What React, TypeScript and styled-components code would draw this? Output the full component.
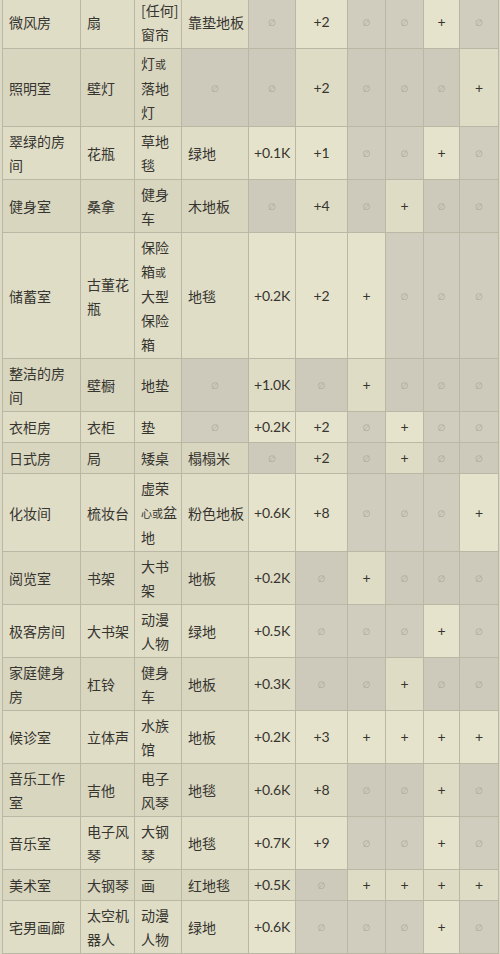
import React from "react";
import styled, { createGlobalStyle, css } from "styled-components";

type Mark = "n" | "p" | string;

interface Room {
  name: string;
  item: string;
  extra: React.ReactNode;
  floor: string | null;
  vals: Mark[];
}

const Line = styled.div`
  white-space: nowrap;
`;

const Small = styled.span`
  font-size: 11px;
`;

const lines = (...ls: React.ReactNode[]) => (
  <>
    {ls.map((l, i) => (
      <Line key={i}>{l}</Line>
    ))}
  </>
);

const rooms: Room[] = [
  { name: "微风房", item: "扇", extra: "[任何]\n窗帘", floor: "靠垫地板", vals: ["n", "+2", "n", "n", "p", "n"] },
  {
    name: "照明室",
    item: "壁灯",
    extra: lines(<>灯<Small>或</Small></>, "落地", "灯"),
    floor: null,
    vals: ["n", "+2", "n", "n", "n", "p"],
  },
  { name: "翠绿的房\n间", item: "花瓶", extra: "草地\n毯", floor: "绿地", vals: ["+0.1K", "+1", "n", "n", "p", "n"] },
  { name: "健身室", item: "桑拿", extra: "健身\n车", floor: "木地板", vals: ["n", "+4", "n", "p", "n", "n"] },
  {
    name: "储蓄室",
    item: "古董花\n瓶",
    extra: lines("保险", <>箱<Small>或</Small></>, "大型", "保险", "箱"),
    floor: "地毯",
    vals: ["+0.2K", "+2", "p", "n", "n", "n"],
  },
  { name: "整洁的房\n间", item: "壁橱", extra: "地垫", floor: null, vals: ["+1.0K", "n", "p", "n", "n", "n"] },
  { name: "衣柜房", item: "衣柜", extra: "垫", floor: null, vals: ["+0.2K", "+2", "n", "p", "n", "n"] },
  { name: "日式房", item: "局", extra: "矮桌", floor: "榻榻米", vals: ["n", "+2", "n", "p", "n", "n"] },
  {
    name: "化妆间",
    item: "梳妆台",
    extra: lines("虚荣", <><Small>心或</Small>盆</>, "地"),
    floor: "粉色地板",
    vals: ["+0.6K", "+8", "n", "n", "n", "p"],
  },
  { name: "阅览室", item: "书架", extra: "大书\n架", floor: "地板", vals: ["+0.2K", "n", "p", "n", "n", "n"] },
  { name: "极客房间", item: "大书架", extra: "动漫\n人物", floor: "绿地", vals: ["+0.5K", "n", "n", "n", "p", "n"] },
  { name: "家庭健身\n房", item: "杠铃", extra: "健身\n车", floor: "地板", vals: ["+0.3K", "n", "n", "p", "n", "n"] },
  { name: "候诊室", item: "立体声", extra: "水族\n馆", floor: "地板", vals: ["+0.2K", "+3", "p", "p", "p", "p"] },
  { name: "音乐工作\n室", item: "吉他", extra: "电子\n风琴", floor: "地毯", vals: ["+0.6K", "+8", "n", "n", "p", "n"] },
  { name: "音乐室", item: "电子风\n琴", extra: "大钢\n琴", floor: "地毯", vals: ["+0.7K", "+9", "n", "n", "p", "n"] },
  { name: "美术室", item: "大钢琴", extra: "画", floor: "红地毯", vals: ["+0.5K", "n", "p", "p", "p", "p"] },
  { name: "宅男画廊", item: "太空机\n器人", extra: "动漫\n人物", floor: "绿地", vals: ["+0.6K", "n", "n", "n", "p", "n"] },
];

const colWidths = [78, 54, 47, 67, 47, 52, 38, 38, 36, 39];

const GlobalStyle = createGlobalStyle`
  html, body {
    margin: 0;
    padding: 0;
    background: #dcd9c4;
  }
  body {
    font-family: Lato, "Noto Sans", "Noto Sans CJK SC", sans-serif;
    color: #363530;
  }
`;

const Page = styled.div`
  height: 954px;
  overflow: hidden;
  padding-left: 2px;
`;

const Table = styled.table`
  margin-top: -5px;
  border-collapse: collapse;
  table-layout: fixed;
  width: 497px;
  font-size: 14px;
  line-height: 24px;
`;

const Row = styled.tr<{ $even: boolean }>`
  --text-bg: ${(p) => (p.$even ? "#d9d6c0" : "#e0ddc7")};
  --yes-bg: ${(p) => (p.$even ? "#dfdcc5" : "#e6e3cc")};
  --no-bg: ${(p) => (p.$even ? "#cdcabb" : "#d0cdbe")};
`;

const cellBase = css`
  border: 1px solid #bab7a5;
  padding: 2px 0;
  vertical-align: middle;
`;

const TextCell = styled.td`
  ${cellBase};
  background: var(--text-bg);
  padding-left: 6px;
  white-space: pre;
  font-family: "Noto Sans CJK SC", "Noto Sans", sans-serif;
  text-align: left;
`;

const ValueCell = styled.td<{ $empty: boolean }>`
  ${cellBase};
  text-align: center;
  background: ${(p) => (p.$empty ? "var(--no-bg)" : "var(--yes-bg)")};
  white-space: nowrap;
  letter-spacing: -0.2px;
`;

const Empty = styled.span`
  font-family: "DejaVu Sans", sans-serif;
  font-size: 9px;
  color: #a9a696;
`;

function Value({ v }: { v: Mark }) {
  if (v === "n") {
    return (
      <ValueCell $empty>
        <Empty>∅</Empty>
      </ValueCell>
    );
  }
  return <ValueCell $empty={false}>{v === "p" ? "+" : v}</ValueCell>;
}

export default function App() {
  return (
    <Page>
      <GlobalStyle />
      <Table>
        <colgroup>
          {colWidths.map((w, i) => (
            <col key={i} style={{ width: w }} />
          ))}
        </colgroup>
        <tbody>
          {rooms.map((r, i) => (
            <Row key={r.name} $even={i % 2 === 1}>
              <TextCell>{r.name}</TextCell>
              <TextCell>{r.item}</TextCell>
              <TextCell>{r.extra}</TextCell>
              {r.floor === null ? <Value v="n" /> : <TextCell>{r.floor}</TextCell>}
              {r.vals.map((v, j) => (
                <Value key={j} v={v} />
              ))}
            </Row>
          ))}
        </tbody>
      </Table>
    </Page>
  );
}
